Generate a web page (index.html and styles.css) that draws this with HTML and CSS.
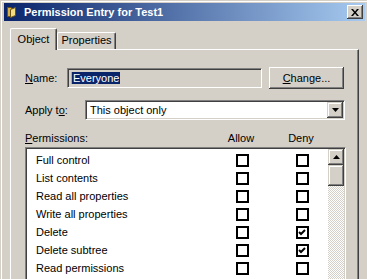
FILE: index.html
```html
<!DOCTYPE html>
<html>
<head>
<meta charset="utf-8">
<title>Permission Entry for Test1</title>
<link rel="stylesheet" href="styles.css">
</head>
<body>
<div class="window">
  <div class="titlebar">
    <svg class="folder" width="11" height="12" viewBox="0 0 11 12">
      <path d="M1.5 1.5 H5 L6 2.5 V10.5 H1.5 Z" fill="#d8b048" stroke="#6a5418" stroke-width="1"/>
      <path d="M4.5 3.5 L9.5 1.5 V9.5 L4.5 11.5 Z" fill="#f4dc80" stroke="#6a5418" stroke-width="1"/>
    </svg>
    <span class="title">Permission Entry for Test1</span>
    <div class="close">
      <svg width="8" height="7" viewBox="0 0 8 7"><path d="M0 0 H2 L4 2.4 L6 0 H8 L5 3.5 L8 7 H6 L4 4.6 L2 7 H0 L3 3.5 Z" fill="#000"/></svg>
    </div>
  </div>
  <div class="tabs">
    <div class="tab active">Object</div>
    <div class="tab props">Properties</div>
  </div>
  <div class="panel">
    <div class="row name-row">
      <span class="lbl name-lbl"><u>N</u>ame:</span>
      <div class="namebox sunken"><span class="sel">Everyone</span></div>
      <div class="btn change"><u>C</u>hange...</div>
    </div>
    <div class="row apply-row">
      <span class="lbl apply-lbl">Apply t<u>o</u>:</span>
      <div class="combo sunken">
        <span class="combo-text">This object only</span>
        <div class="dd raised">
          <svg width="7" height="4" viewBox="0 0 7 4"><path d="M0 0 H7 L3.5 4 Z" fill="#000"/></svg>
        </div>
      </div>
    </div>
    <div class="perm-head">
      <span class="perm-lbl"><u>P</u>ermissions:</span>
      <span class="col-h">Allow</span>
      <span class="col-h deny-h">Deny</span>
    </div>
    <div class="list sunken">
      <div class="rows">
        <div class="item"><span class="item-name">Full control</span><span class="cb"></span><span class="cb deny"></span></div>
        <div class="item"><span class="item-name">List contents</span><span class="cb"></span><span class="cb deny"></span></div>
        <div class="item"><span class="item-name">Read all properties</span><span class="cb"></span><span class="cb deny"></span></div>
        <div class="item"><span class="item-name">Write all properties</span><span class="cb"></span><span class="cb deny"></span></div>
        <div class="item"><span class="item-name">Delete</span><span class="cb"></span><span class="cb deny"><svg width="9" height="9" viewBox="0 0 9 9"><path d="M1 4 L3 6 L7 2" fill="none" stroke="#000" stroke-width="2"/></svg></span></div>
        <div class="item"><span class="item-name">Delete subtree</span><span class="cb"></span><span class="cb deny"><svg width="9" height="9" viewBox="0 0 9 9"><path d="M1 4 L3 6 L7 2" fill="none" stroke="#000" stroke-width="2"/></svg></span></div>
        <div class="item"><span class="item-name">Read permissions</span><span class="cb"></span><span class="cb deny"></span></div>
      </div>
      <div class="scrollbar">
        <div class="sb-btn raised">
          <svg width="7" height="4" viewBox="0 0 7 4"><path d="M0 4 H7 L3.5 0 Z" fill="#000"/></svg>
        </div>
        <div class="sb-thumb raised"></div>
        <div class="sb-track"></div>
      </div>
    </div>
  </div>
</div>
</body>
</html>
```

FILE: styles.css
```css
* { box-sizing: border-box; }
html, body { margin: 0; padding: 0; }
body {
  width: 367px;
  height: 279px;
  overflow: hidden;
  background: #d4d0c8;
  font-family: "Liberation Sans", Arial, sans-serif;
  font-size: 11px;
  color: #000;
}
.window {
  width: 369px;
  height: 300px;
  padding: 3px 4px 0 4px;
  background: #d4d0c8;
  box-shadow: inset 1px 1px 0 #d4d0c8, inset 2px 2px 0 #fff;
}
.titlebar {
  height: 18px;
  display: flex;
  align-items: center;
  padding: 0 2px;
  background: linear-gradient(to right, #0a246a, #a6caf0);
}
.folder { flex: none; }
.title {
  flex: 1;
  margin-left: 7px;
  color: #fff;
  font-weight: bold;
  white-space: nowrap;
}
.close {
  width: 16px;
  height: 14px;
  display: flex;
  align-items: center;
  justify-content: center;
  background: #d4d0c8;
  box-shadow: inset -1px -1px 0 #404040, inset 1px 1px 0 #fff, inset -2px -2px 0 #808080;
}
.raised {
  background: #d4d0c8;
  box-shadow: inset -1px -1px 0 #404040, inset 1px 1px 0 #d4d0c8, inset -2px -2px 0 #808080, inset 2px 2px 0 #fff;
}
.sunken {
  border-style: solid;
  border-width: 1px;
  border-color: #808080 #fff #fff #808080;
  box-shadow: inset 1px 1px 0 #404040, inset -1px -1px 0 #d4d0c8;
}
.tabs {
  display: flex;
  align-items: flex-end;
  height: 21px;
  margin: 7px 0 0 6px;
  position: relative;
  z-index: 1;
}
.tab {
  height: 17px;
  display: flex;
  justify-content: center;
  align-items: flex-start;
  padding-top: 1px;
  line-height: 13px;
  background: #d4d0c8;
  border-left: 1px solid #fff;
  border-top: 1px solid #fff;
  border-right: 1px solid #404040;
  border-radius: 2px 2px 0 0;
  box-shadow: inset -1px 0 0 #808080;
}
.tab.active {
  width: 47px;
  height: 22px;
  margin-bottom: -1px;
  padding-top: 4px;
}
.tab.props { width: 59px; }
.panel {
  width: 349px;
  height: 240px;
  margin-left: 6px;
  padding: 17px 0 0 14px;
  border-top: 1px solid #fff;
  border-left: 1px solid #fff;
  border-right: 1px solid #404040;
  box-shadow: inset -1px 0 0 #808080;
}
.row { display: flex; align-items: center; }
.name-lbl { width: 42px; }
.namebox {
  width: 195px;
  height: 20px;
  display: flex;
  align-items: center;
  padding-left: 4px;
  background: #d4d0c8;
}
.sel {
  background: #0a246a;
  color: #fff;
  line-height: 12px;
  padding: 0 1px;
  box-shadow: -1px 0 0 #e0a040;
}
.btn.change {
  width: 75px;
  height: 22px;
  margin-left: 7px;
  display: flex;
  align-items: center;
  justify-content: center;
  background: #d4d0c8;
  box-shadow: inset -1px -1px 0 #404040, inset 1px 1px 0 #fff, inset -2px -2px 0 #808080;
}
.apply-row { margin-top: 11px; }
.apply-lbl { width: 60px; }
.combo {
  width: 260px;
  height: 20px;
  display: flex;
  align-items: center;
  background: #fff;
  padding: 1px;
}
.combo-text { flex: 1; padding-left: 3px; }
.dd {
  width: 16px;
  height: 16px;
  display: flex;
  align-items: center;
  justify-content: center;
}
.perm-head {
  display: flex;
  height: 14px;
  line-height: 14px;
  margin-top: 11px;
}
.perm-lbl { width: 201px; }
.col-h { width: 30px; text-align: center; }
.deny-h { margin-left: 30px; }
.list {
  width: 321px;
  height: 200px;
  margin-top: 2px;
  display: flex;
  background: #fff;
  padding: 1px;
}
.rows { flex: 1; padding-top: 2px; }
.item {
  height: 18px;
  display: flex;
  align-items: center;
}
.item-name {
  width: 209px;
  padding-left: 9px;
  white-space: nowrap;
}
.cb {
  width: 13px;
  height: 13px;
  border: 2px solid #000;
  background: #fff;
  display: flex;
  align-items: center;
  justify-content: center;
}
.cb.deny { margin-left: 47px; }
.scrollbar {
  width: 16px;
  display: flex;
  flex-direction: column;
}
.sb-btn {
  height: 16px;
  display: flex;
  align-items: center;
  justify-content: center;
}
.sb-thumb { height: 21px; }
.sb-track {
  flex: 1;
  background: repeating-conic-gradient(#fff 0 25%, #d4d0c8 0 50%) 0 0 / 2px 2px;
}
```
